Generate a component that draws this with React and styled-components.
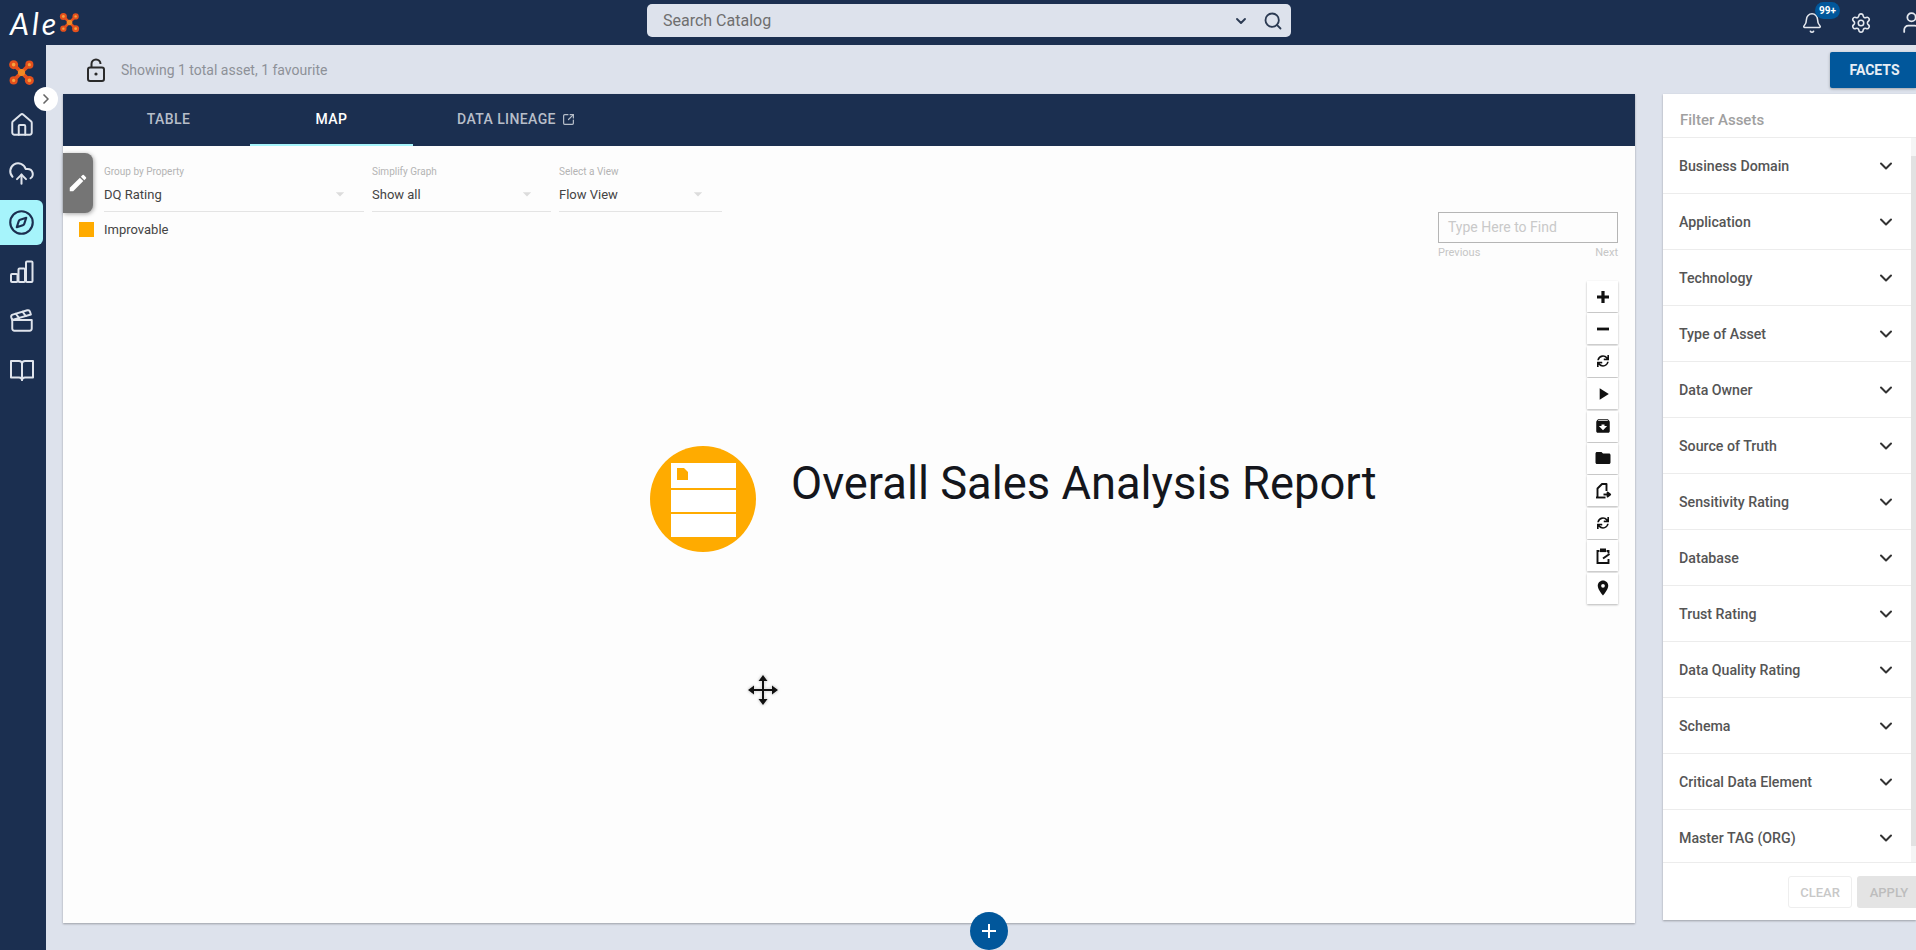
import styled, { createGlobalStyle } from "styled-components";
import {
  Home,
  CloudUpload,
  Compass,
  Clapperboard,
  Bell,
  Settings,
  User,
  Search,
  ChevronDown,
  ChevronRight,
  SquareArrowOutUpRight,
} from "lucide-react";
import {
  MdAdd,
  MdPlayArrow,
  MdArchive,
  MdFolder,
  MdPlace,
  MdEdit,
  MdArrowDropDown,
} from "react-icons/md";
import { FaSync } from "react-icons/fa";

const NAVY = "#1b2f50";
const BLUE = "#01579b";

const FILTERS = [
  "Business Domain",
  "Application",
  "Technology",
  "Type of Asset",
  "Data Owner",
  "Source of Truth",
  "Sensitivity Rating",
  "Database",
  "Trust Rating",
  "Data Quality Rating",
  "Schema",
  "Critical Data Element",
  "Master TAG (ORG)",
];

const SELECTS = [
  { label: "Group by Property", value: "DQ Rating", width: 260 },
  { label: "Simplify Graph", value: "Show all", width: 179 },
  { label: "Select a View", value: "Flow View", width: 163 },
];

const XMark = ({ size }) => (
  <svg width={size} height={size} viewBox="0 0 24 24">
    <path d="M5 5 L19 19 M19 5 L5 19" stroke="#e4501c" strokeWidth="3.2" />
    <circle cx="5" cy="5" r="4" fill="#e4501c" />
    <circle cx="19" cy="5" r="3.6" fill="#e4501c" />
    <circle cx="5" cy="19" r="3.6" fill="#e4501c" />
    <circle cx="19" cy="19" r="4" fill="#e4501c" />
    <circle cx="12" cy="12" r="3.2" fill="#f08a24" />
    <circle cx="5" cy="5" r="1.6" fill="#f4a340" />
    <circle cx="19" cy="5" r="1.4" fill="#f4a340" />
    <circle cx="5" cy="19" r="1.4" fill="#f4a340" />
    <circle cx="19" cy="19" r="1.6" fill="#f4a340" />
  </svg>
);

const LockIcon = () => (
  <svg width="18" height="24" viewBox="0 0 18 24" fill="none" stroke="#2a2a2a" strokeWidth="2">
    <rect x="1" y="9.5" width="16" height="13.5" rx="2" />
    <path d="M4.5 9.5V6a4.5 4.5 0 0 1 9 0" />
    <circle cx="9" cy="16" r="1.6" fill="#2a2a2a" stroke="none" />
  </svg>
);

const BarsIcon = () => (
  <svg width="26" height="26" viewBox="0 0 26 26" fill="none" stroke="currentColor" strokeWidth="2">
    <rect x="2" y="15" width="6.5" height="8" rx="1" />
    <rect x="9.5" y="9.5" width="6.5" height="13.5" rx="1" />
    <rect x="17" y="2.5" width="6.5" height="20.5" rx="1" />
  </svg>
);

const BookIcon = () => (
  <svg width="26" height="26" viewBox="0 0 26 26" fill="none" stroke="currentColor" strokeWidth="2" strokeLinejoin="round">
    <path d="M2 4h8c2 0 3 1 3 2.5V23c0-1.5-1-2.5-3-2.5H2z" />
    <path d="M24 4h-8c-2 0-3 1-3 2.5V23c0-1.5 1-2.5 3-2.5h8z" />
  </svg>
);

const PlusIcon = () => (
  <svg width="14" height="14" viewBox="0 0 14 14">
    <path d="M7 1V13 M1 7H13" stroke="#111" strokeWidth="3.2" />
  </svg>
);

const MinusIcon = () => (
  <svg width="14" height="14" viewBox="0 0 14 14">
    <path d="M1 7H13" stroke="#111" strokeWidth="2.8" />
  </svg>
);

const ExportIcon = () => (
  <svg width="18" height="18" viewBox="0 0 18 18" fill="none" stroke="#111" strokeWidth="1.9" strokeLinejoin="round">
    <path d="M3.5 15V6.5L8 2h4.5v7" />
    <path d="M2 15.5h9.5" />
    <path d="M9.5 12.5h5" />
    <path d="M13.6 10.4l2.6 2.1-2.6 2.1z" fill="#111" />
  </svg>
);

const ClipboardEditIcon = () => (
  <svg width="18" height="18" viewBox="0 0 18 18" fill="none" stroke="#111" strokeWidth="1.9">
    <path d="M12.5 4H14.5V6.5 M14.5 12V16H3.5V4H5.5" />
    <rect x="6" y="1.5" width="6" height="3.6" fill="#111" stroke="none" />
    <path d="M9 11.5L15.5 7" strokeWidth="2" />
  </svg>
);

const ReportGlyph = () => (
  <svg width="106" height="106" viewBox="0 0 106 106">
    <circle cx="53" cy="53" r="53" fill="#ffab00" />
    <rect x="21" y="17" width="65" height="25" fill="#fff" />
    <rect x="21" y="44" width="65" height="22" fill="#fff" />
    <rect x="21" y="68" width="65" height="23" fill="#fff" />
    <path d="M27 22h7l4 4v8H27z" fill="#ffab00" />
  </svg>
);

const MoveCursor = () => (
  <svg width="32" height="32" viewBox="0 0 32 32">
    <path d="M16 4V28 M4 16H28" stroke="#111" strokeWidth="2" />
    <path d="M16 1l4.5 6h-9z M16 31l4.5-6h-9z M1 16l6-4.5v9z M31 16l-6-4.5v9z" fill="#111" />
  </svg>
);

const TOOLS = [
  <PlusIcon />,
  <MinusIcon />,
  <FaSync size={12} />,
  <MdPlayArrow size={20} />,
  <MdArchive size={18} />,
  <MdFolder size={18} />,
  <ExportIcon />,
  <FaSync size={12} />,
  <ClipboardEditIcon />,
  <MdPlace size={18} />,
];

export default function App() {
  return (
    <>
      <GlobalStyle />
      <Page>
        <TopBar>
          <LogoSlot>
            <LogoText>Ale</LogoText>
            <XMark size={21} />
          </LogoSlot>
          <SearchBox>
            <SearchText>Search Catalog</SearchText>
            <ChevronDown size={16} strokeWidth={2.8} />
            <Search size={20} strokeWidth={2.2} />
          </SearchBox>
          <TopActions>
            <BellWrap>
              <Bell size={22} strokeWidth={1.7} />
              <Badge>99+</Badge>
            </BellWrap>
            <Settings size={22} strokeWidth={1.7} />
            <User size={25} strokeWidth={1.7} />
          </TopActions>
        </TopBar>

        <Body>
          <SideBar>
            <Expander>
              <ChevronRight size={16} strokeWidth={2.5} />
            </Expander>
            <SideMark>
              <XMark size={27} />
            </SideMark>
            <SideItem><Home size={26} strokeWidth={1.8} /></SideItem>
            <SideItem><CloudUpload size={27} strokeWidth={1.8} /></SideItem>
            <SideItem $active><Compass size={27} strokeWidth={1.9} /></SideItem>
            <SideItem><BarsIcon /></SideItem>
            <SideItem><Clapperboard size={26} strokeWidth={1.8} /></SideItem>
            <SideItem><BookIcon /></SideItem>
          </SideBar>

          <Content>
            <StatusBar>
              <StatusInfo>
                <LockIcon />
                <StatusText>Showing 1 total asset, 1 favourite</StatusText>
              </StatusInfo>
              <FacetsButton>FACETS</FacetsButton>
            </StatusBar>

            <Panels>
              <MapCard>
                <Tabs>
                  <Tab>TABLE</Tab>
                  <Tab $active>MAP</Tab>
                  <Tab $wide>
                    DATA LINEAGE
                    <SquareArrowOutUpRight size={13} strokeWidth={2.2} />
                  </Tab>
                </Tabs>

                <Canvas>
                  <EditTab>
                    <MdEdit size={22} />
                  </EditTab>

                  <SelectRow>
                    {SELECTS.map((s) => (
                      <SelectField key={s.label} $width={s.width}>
                        <SelectLabel>{s.label}</SelectLabel>
                        <SelectValue>
                          {s.value}
                          <MdArrowDropDown size={20} color="#dcdcdc" />
                        </SelectValue>
                      </SelectField>
                    ))}
                  </SelectRow>

                  <Legend>
                    <Swatch />
                    <LegendText>Improvable</LegendText>
                  </Legend>

                  <FindBox>
                    <FindInput>Type Here to Find</FindInput>
                    <FindNav>
                      <span>Previous</span>
                      <span>Next</span>
                    </FindNav>
                  </FindBox>

                  <ToolStack>
                    {TOOLS.map((icon, i) => (
                      <ToolButton key={i}>{icon}</ToolButton>
                    ))}
                  </ToolStack>

                  <GraphNode>
                    <ReportGlyph />
                    <NodeTitle>Overall Sales Analysis Report</NodeTitle>
                  </GraphNode>

                  <CursorMark>
                    <MoveCursor />
                  </CursorMark>
                </Canvas>

                <AddButton>
                  <MdAdd size={24} />
                </AddButton>
              </MapCard>

              <FilterPanel>
                <FilterTitle>Filter Assets</FilterTitle>
                <FilterBody>
                  <FilterList>
                    {FILTERS.map((f) => (
                      <FilterRow key={f}>
                        {f}
                        <ChevronDown size={20} strokeWidth={2.4} color="#333" />
                      </FilterRow>
                    ))}
                  </FilterList>
                  <ScrollTrack>
                    <ScrollThumb />
                  </ScrollTrack>
                </FilterBody>
                <FilterFooter>
                  <ClearButton>CLEAR</ClearButton>
                  <ApplyButton>APPLY</ApplyButton>
                </FilterFooter>
              </FilterPanel>
            </Panels>
          </Content>
        </Body>
      </Page>
    </>
  );
}

const GlobalStyle = createGlobalStyle`
  html, body {
    margin: 0;
    padding: 0;
    height: 100%;
    overflow: hidden;
    background: #dde2ec;
    font-family: Roboto, "Liberation Sans", sans-serif;
  }
  * { box-sizing: border-box; }
`;

const Page = styled.div`
  display: flex;
  flex-direction: column;
  width: 1916px;
  height: 950px;
  overflow: hidden;
`;

const TopBar = styled.header`
  display: flex;
  align-items: center;
  flex: none;
  height: 45px;
  background: ${NAVY};
  color: #e4e8ef;
`;

const LogoSlot = styled.div`
  display: flex;
  align-items: center;
  gap: 0;
  flex: none;
  width: 647px;
  padding-left: 10px;
`;

const LogoText = styled.span`
  font-family: Lato, sans-serif;
  font-style: italic;
  font-weight: 400;
  font-size: 30px;
  line-height: 1;
  letter-spacing: 3px;
  color: #fff;
`;

const SearchBox = styled.div`
  display: flex;
  align-items: center;
  gap: 14px;
  flex: none;
  width: 644px;
  height: 33px;
  margin-bottom: 4px;
  padding: 0 8px 0 16px;
  border-radius: 5px;
  background: #dde2ec;
  color: #2b3a52;
`;

const SearchText = styled.span`
  flex: 1;
  font-size: 16px;
  color: #6f6f6f;
`;

const TopActions = styled.div`
  display: flex;
  align-items: center;
  gap: 27px;
  margin-left: auto;
  margin-right: -8px;
`;

const BellWrap = styled.div`
  position: relative;
  display: flex;
`;

const Badge = styled.span`
  position: absolute;
  left: 14px;
  top: -10px;
  width: 25px;
  height: 17px;
  border-radius: 9px;
  background: ${BLUE};
  color: #fff;
  font-size: 10px;
  font-weight: 700;
  line-height: 17px;
  text-align: center;
`;

const Body = styled.div`
  display: flex;
  flex: 1;
  min-height: 0;
`;

const SideBar = styled.nav`
  position: relative;
  display: flex;
  flex-direction: column;
  flex: none;
  gap: 4px;
  width: 46px;
  background: ${NAVY};
`;

const Expander = styled.button`
  position: absolute;
  left: 34px;
  top: 42px;
  z-index: 3;
  display: flex;
  align-items: center;
  justify-content: center;
  width: 24px;
  height: 24px;
  padding: 0;
  border: 0;
  border-radius: 50%;
  background: #fff;
  color: #666;
`;

const SideMark = styled.div`
  display: flex;
  justify-content: center;
  width: 43px;
  margin: 14px 0 12px;
`;

const SideItem = styled.div`
  display: flex;
  align-items: center;
  justify-content: center;
  width: 43px;
  height: 45px;
  border-radius: 0 6px 6px 0;
  background: ${(p) => (p.$active ? "#a6f4fb" : "transparent")};
  color: ${(p) => (p.$active ? NAVY : "#dfe4ec")};
`;

const Content = styled.main`
  display: flex;
  flex-direction: column;
  flex: 1;
  min-width: 0;
`;

const StatusBar = styled.div`
  display: flex;
  align-items: center;
  justify-content: space-between;
  flex: none;
  height: 49px;
  padding-left: 41px;
`;

const StatusInfo = styled.div`
  display: flex;
  align-items: center;
  gap: 16px;
`;

const StatusText = styled.span`
  font-size: 14px;
  color: #8d9198;
`;

const FacetsButton = styled.button`
  width: 86px;
  height: 36px;
  padding: 0 0 0 3px;
  border: 0;
  border-radius: 2px 0 0 2px;
  background: ${BLUE};
  color: #e8eef5;
  font-family: inherit;
  font-size: 14px;
  font-weight: 700;
  box-shadow: 0 1px 3px rgba(0, 0, 0, 0.3);
`;

const Panels = styled.div`
  display: flex;
  gap: 28px;
  padding-left: 17px;
`;

const MapCard = styled.section`
  position: relative;
  display: flex;
  flex-direction: column;
  flex: none;
  width: 1572px;
  height: 829px;
  background: #fdfdfd;
  box-shadow: 0 1px 2px rgba(0, 0, 0, 0.3);
`;

const Tabs = styled.div`
  display: flex;
  flex: none;
  height: 52px;
  padding-left: 24px;
  background: ${NAVY};
`;

const Tab = styled.div`
  display: flex;
  align-items: center;
  justify-content: center;
  gap: 6px;
  width: ${(p) => (p.$wide ? "206px" : "163px")};
  font-size: 14px;
  font-weight: 500;
  letter-spacing: 0.4px;
  color: ${(p) => (p.$active ? "#fff" : "#b7bec9")};
  border-bottom: 2px solid ${(p) => (p.$active ? "#a6f4fb" : "transparent")};
`;

const Canvas = styled.div`
  position: relative;
  flex: 1;
  padding: 20px 0 0 41px;
`;

const EditTab = styled.div`
  position: absolute;
  left: 0;
  top: 7px;
  display: flex;
  align-items: center;
  justify-content: center;
  width: 30px;
  height: 60px;
  border-radius: 0 8px 8px 0;
  background: #757575;
  color: #fff;
  box-shadow: 1px 1px 4px rgba(0, 0, 0, 0.35);
`;

const SelectRow = styled.div`
  display: flex;
  gap: 8px;
`;

const SelectField = styled.div`
  width: ${(p) => p.$width}px;
  height: 46px;
  border-bottom: 1px solid #e4e4e4;
`;

const SelectLabel = styled.div`
  font-size: 10px;
  line-height: 12px;
  color: #b4b4b4;
`;

const SelectValue = styled.div`
  display: flex;
  align-items: center;
  justify-content: space-between;
  height: 20px;
  margin-top: 6px;
  padding-right: 14px;
  font-size: 13px;
  color: #444;
`;

const Legend = styled.div`
  display: flex;
  align-items: center;
  gap: 10px;
  margin: 10px 0 0 -25px;
`;

const Swatch = styled.span`
  width: 15px;
  height: 15px;
  background: #ffab00;
`;

const LegendText = styled.span`
  font-size: 13px;
  color: #444;
`;

const FindBox = styled.div`
  position: absolute;
  right: 17px;
  top: 66px;
  width: 180px;
`;

const FindInput = styled.div`
  height: 31px;
  padding-left: 9px;
  border: 1px solid #b5b5b5;
  font-size: 14px;
  line-height: 29px;
  color: #c9c9c9;
`;

const FindNav = styled.div`
  display: flex;
  justify-content: space-between;
  margin-top: 3px;
  font-size: 11px;
  color: #c6c6c6;
`;

const ToolStack = styled.div`
  position: absolute;
  right: 17px;
  top: 135px;
  display: flex;
  flex-direction: column;
  gap: 1.4px;
`;

const ToolButton = styled.div`
  display: flex;
  align-items: center;
  justify-content: center;
  width: 31px;
  height: 31px;
  background: #fff;
  color: #111;
  box-shadow: 0 1px 2px rgba(0, 0, 0, 0.28);
`;

const GraphNode = styled.div`
  position: absolute;
  left: 587px;
  top: 300px;
  display: flex;
  align-items: flex-start;
  gap: 35px;
`;

const NodeTitle = styled.div`
  margin-top: 11px;
  font-size: 45.3px;
  line-height: 54px;
  color: #14161c;
  white-space: nowrap;
`;

const CursorMark = styled.div`
  position: absolute;
  left: 684px;
  top: 528px;
  display: flex;
  filter: drop-shadow(0 0 1px #fff) drop-shadow(0 0 1px rgba(0, 0, 0, 0.3));
`;

const AddButton = styled.button`
  position: absolute;
  left: 907px;
  bottom: -27px;
  z-index: 2;
  display: flex;
  align-items: center;
  justify-content: center;
  width: 38px;
  height: 38px;
  padding: 0;
  border: 0;
  border-radius: 50%;
  background: ${BLUE};
  color: #fff;
`;

const FilterPanel = styled.aside`
  display: flex;
  flex-direction: column;
  flex: none;
  width: 253px;
  height: 826px;
  background: #fff;
  box-shadow: 0 1px 2px rgba(0, 0, 0, 0.3);
`;

const FilterTitle = styled.div`
  flex: none;
  height: 44px;
  padding: 17px 0 0 17px;
  border-bottom: 1px solid #ececec;
  font-size: 15px;
  font-weight: 500;
  line-height: 18px;
  color: #a0a0a0;
`;

const FilterBody = styled.div`
  display: flex;
  flex: none;
  height: 725px;
  overflow: hidden;
  border-bottom: 1px solid #ececec;
`;

const FilterList = styled.div`
  flex: 1;
  min-width: 0;
`;

const FilterRow = styled.div`
  display: flex;
  align-items: center;
  justify-content: space-between;
  height: 56px;
  padding: 0 15px 0 16px;
  border-bottom: 1px solid #ececec;
  font-size: 14.2px;
  font-weight: 500;
  color: #555;
`;

const ScrollTrack = styled.div`
  flex: none;
  width: 5px;
  background: #f5f5f5;
`;

const ScrollThumb = styled.div`
  width: 100%;
  height: 690px;
  margin-top: 18px;
  background: #e2e2e2;
`;

const FilterFooter = styled.div`
  display: flex;
  gap: 5px;
  padding: 13px 0 0 125px;
`;

const ClearButton = styled.button`
  flex: none;
  width: 64px;
  height: 32px;
  padding: 0;
  border: 1px solid #eee;
  border-radius: 3px;
  background: #fff;
  color: #c8c8c8;
  font-family: inherit;
  font-size: 13px;
  font-weight: 500;
`;

const ApplyButton = styled(ClearButton)`
  border: 0;
  background: #e4e4e4;
  color: #bdbdbd;
`;
